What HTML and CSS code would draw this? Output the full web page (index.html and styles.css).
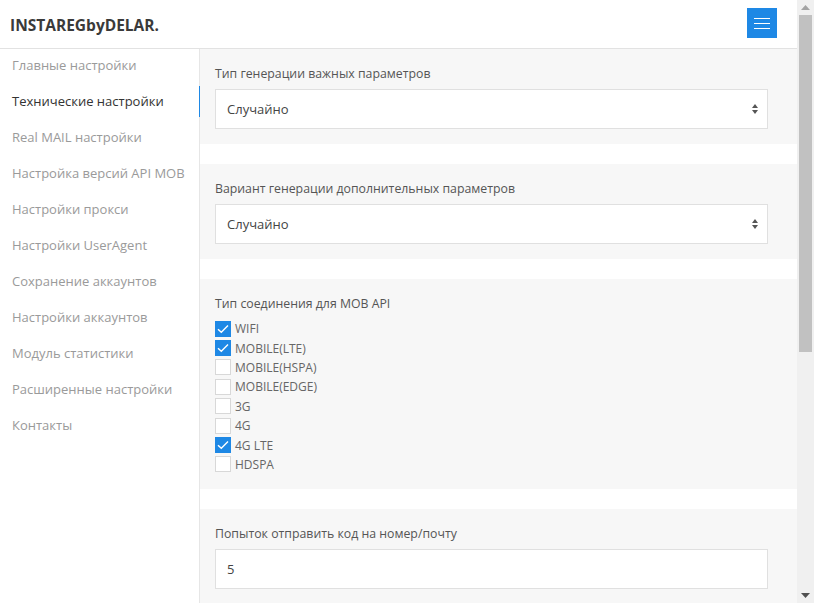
FILE: index.html
```html
<!DOCTYPE html>
<html lang="ru">
<head>
    <meta charset="UTF-8">
    <meta name="viewport" content="width=device-width, initial-scale=1.0">
    <title>INSTAREGbyDELAR.</title>
    <link rel="stylesheet" href="styles.css">
</head>
<body>
    <div class="screen">
        <div class="page">
            <header class="topbar">
                <div class="logo">INSTAREGbyDELAR.</div>
                <button class="menu-btn" type="button">
                    <span></span><span></span><span></span>
                </button>
            </header>

            <div class="layout">
                <nav class="sidebar">
                    <a class="nav-item" href="#">Главные настройки</a>
                    <a class="nav-item active" href="#">Технические настройки</a>
                    <a class="nav-item" href="#">Real MAIL настройки</a>
                    <a class="nav-item" href="#">Настройка версий API MOB</a>
                    <a class="nav-item" href="#">Настройки прокси</a>
                    <a class="nav-item" href="#">Настройки UserAgent</a>
                    <a class="nav-item" href="#">Сохранение аккаунтов</a>
                    <a class="nav-item" href="#">Настройки аккаунтов</a>
                    <a class="nav-item" href="#">Модуль статистики</a>
                    <a class="nav-item" href="#">Расширенные настройки</a>
                    <a class="nav-item" href="#">Контакты</a>
                </nav>

                <main class="content">
                    <section class="panel">
                        <label class="field-label">Тип генерации важных параметров</label>
                        <div class="select-wrap">
                            <select class="field">
                                <option>Случайно</option>
                            </select>
                            <svg class="select-arrows" width="6" height="10" viewBox="0 0 6 10">
                                <path d="M3 0 L6 4 L0 4 Z M0 6 L6 6 L3 10 Z" fill="#555"/>
                            </svg>
                        </div>
                    </section>

                    <section class="panel">
                        <label class="field-label">Вариант генерации дополнительных параметров</label>
                        <div class="select-wrap">
                            <select class="field">
                                <option>Случайно</option>
                            </select>
                            <svg class="select-arrows" width="6" height="10" viewBox="0 0 6 10">
                                <path d="M3 0 L6 4 L0 4 Z M0 6 L6 6 L3 10 Z" fill="#555"/>
                            </svg>
                        </div>
                    </section>

                    <section class="panel">
                        <label class="field-label">Тип соединения для MOB API</label>
                        <div class="check-list">
                            <label class="check-row"><span class="box checked"><svg width="16" height="16" viewBox="0 0 16 16"><path d="M3 8.2 L6.3 11.3 L13 4.6" fill="none" stroke="#fff" stroke-width="1.4"/></svg></span>WIFI</label>
                            <label class="check-row"><span class="box checked"><svg width="16" height="16" viewBox="0 0 16 16"><path d="M3 8.2 L6.3 11.3 L13 4.6" fill="none" stroke="#fff" stroke-width="1.4"/></svg></span>MOBILE(LTE)</label>
                            <label class="check-row"><span class="box"></span>MOBILE(HSPA)</label>
                            <label class="check-row"><span class="box"></span>MOBILE(EDGE)</label>
                            <label class="check-row"><span class="box"></span>3G</label>
                            <label class="check-row"><span class="box"></span>4G</label>
                            <label class="check-row"><span class="box checked"><svg width="16" height="16" viewBox="0 0 16 16"><path d="M3 8.2 L6.3 11.3 L13 4.6" fill="none" stroke="#fff" stroke-width="1.4"/></svg></span>4G LTE</label>
                            <label class="check-row"><span class="box"></span>HDSPA</label>
                        </div>
                    </section>

                    <section class="panel">
                        <label class="field-label">Попыток отправить код на номер/почту</label>
                        <input class="field" type="text" value="5">
                    </section>
                </main>
            </div>
        </div>

        <!-- window scrollbar -->
        <div class="scrollbar">
            <div class="scroll-btn">
                <svg width="9" height="5" viewBox="0 0 9 5"><path d="M4.5 0 L9 5 L0 5 Z" fill="#a3a3a3"/></svg>
            </div>
            <div class="scroll-track">
                <div class="scroll-thumb"></div>
            </div>
            <div class="scroll-btn">
                <svg width="9" height="5" viewBox="0 0 9 5"><path d="M0 0 L9 0 L4.5 5 Z" fill="#505050"/></svg>
            </div>
        </div>
    </div>
</body>
</html>
```

FILE: styles.css
```css
body {
    margin: 0;
    padding: 0;
    height: 100vh;
    overflow: hidden;
    background-color: #fff;
    font-family: 'Open Sans', 'Noto Sans', sans-serif;
    color: #333;
}
.screen {
    display: flex;
    height: 100vh;
}
.page {
    flex: 1;
    display: flex;
    flex-direction: column;
    min-width: 0;
}
/* Header */
.topbar {
    height: 48px;
    flex-shrink: 0;
    display: flex;
    align-items: center;
    justify-content: space-between;
    padding: 0 20px 0 10px;
    border-bottom: 1px solid #e2e2e2;
}
.logo {
    font-size: 15.5px;
    font-weight: bold;
    color: #3a3a3a;
    margin-top: 1px;
}
.menu-btn {
    width: 30px;
    height: 30px;
    margin-top: -2px;
    padding: 0;
    border: none;
    background-color: #1e88e5;
    display: flex;
    flex-direction: column;
    align-items: center;
    justify-content: center;
    gap: 4px;
}
.menu-btn span {
    display: block;
    width: 16px;
    height: 1px;
    background-color: #fff;
}
/* Layout */
.layout {
    flex: 1;
    display: flex;
    min-height: 0;
}
.sidebar {
    width: 199px;
    flex-shrink: 0;
    padding-top: 1px;
    border-right: 1px solid #e6e6e6;
    display: flex;
    flex-direction: column;
}
.nav-item {
    height: 31px;
    line-height: 31px;
    margin-bottom: 5px;
    margin-right: -1px;
    padding: 0 12px;
    border-right: 1px solid transparent;
    font-size: 13px;
    color: #9a9a9a;
    text-decoration: none;
    white-space: nowrap;
}
.nav-item.active {
    color: #333;
    border-right-color: #1e88e5;
}
.content {
    flex: 1;
    overflow: hidden;
}
.panel {
    background-color: #f7f7f7;
    padding: 15px 29px 15px 15px;
    margin-bottom: 20px;
}
.field-label {
    display: block;
    font-size: 12.3px;
    line-height: 20px;
    color: #555;
    margin-bottom: 5px;
}
.field {
    display: block;
    box-sizing: border-box;
    width: 100%;
    height: 40px;
    padding: 0 11px;
    border: 1px solid #e0e0e0;
    border-radius: 0;
    background-color: #fff;
    font-family: inherit;
    font-size: 13px;
    color: #444;
    outline: none;
    appearance: none;
    -webkit-appearance: none;
}
.select-wrap {
    position: relative;
}
.select-arrows {
    position: absolute;
    right: 10px;
    top: 15px;
}
/* Checkboxes */
.check-list {
    display: flex;
    flex-direction: column;
    margin-top: 5px;
}
.check-row {
    height: 19.4px;
    display: flex;
    align-items: center;
    gap: 4px;
    font-size: 12px;
    color: #666;
}
.box {
    width: 16px;
    height: 16px;
    box-sizing: border-box;
    border: 1px solid #d8d8d8;
    background-color: #fff;
    display: flex;
}
.box.checked {
    background-color: #1e88e5;
    border-color: #1e88e5;
}
.box svg {
    margin: -1px;
}
/* Scrollbar */
.scrollbar {
    width: 17px;
    flex-shrink: 0;
    display: flex;
    flex-direction: column;
    background-color: #f0f0f0;
}
.scroll-btn {
    height: 15px;
    display: flex;
    align-items: center;
    justify-content: center;
}
.scroll-track {
    flex: 1;
    padding: 0 2px;
}
.scroll-thumb {
    height: 337px;
    background-color: #c1c1c1;
}
```
